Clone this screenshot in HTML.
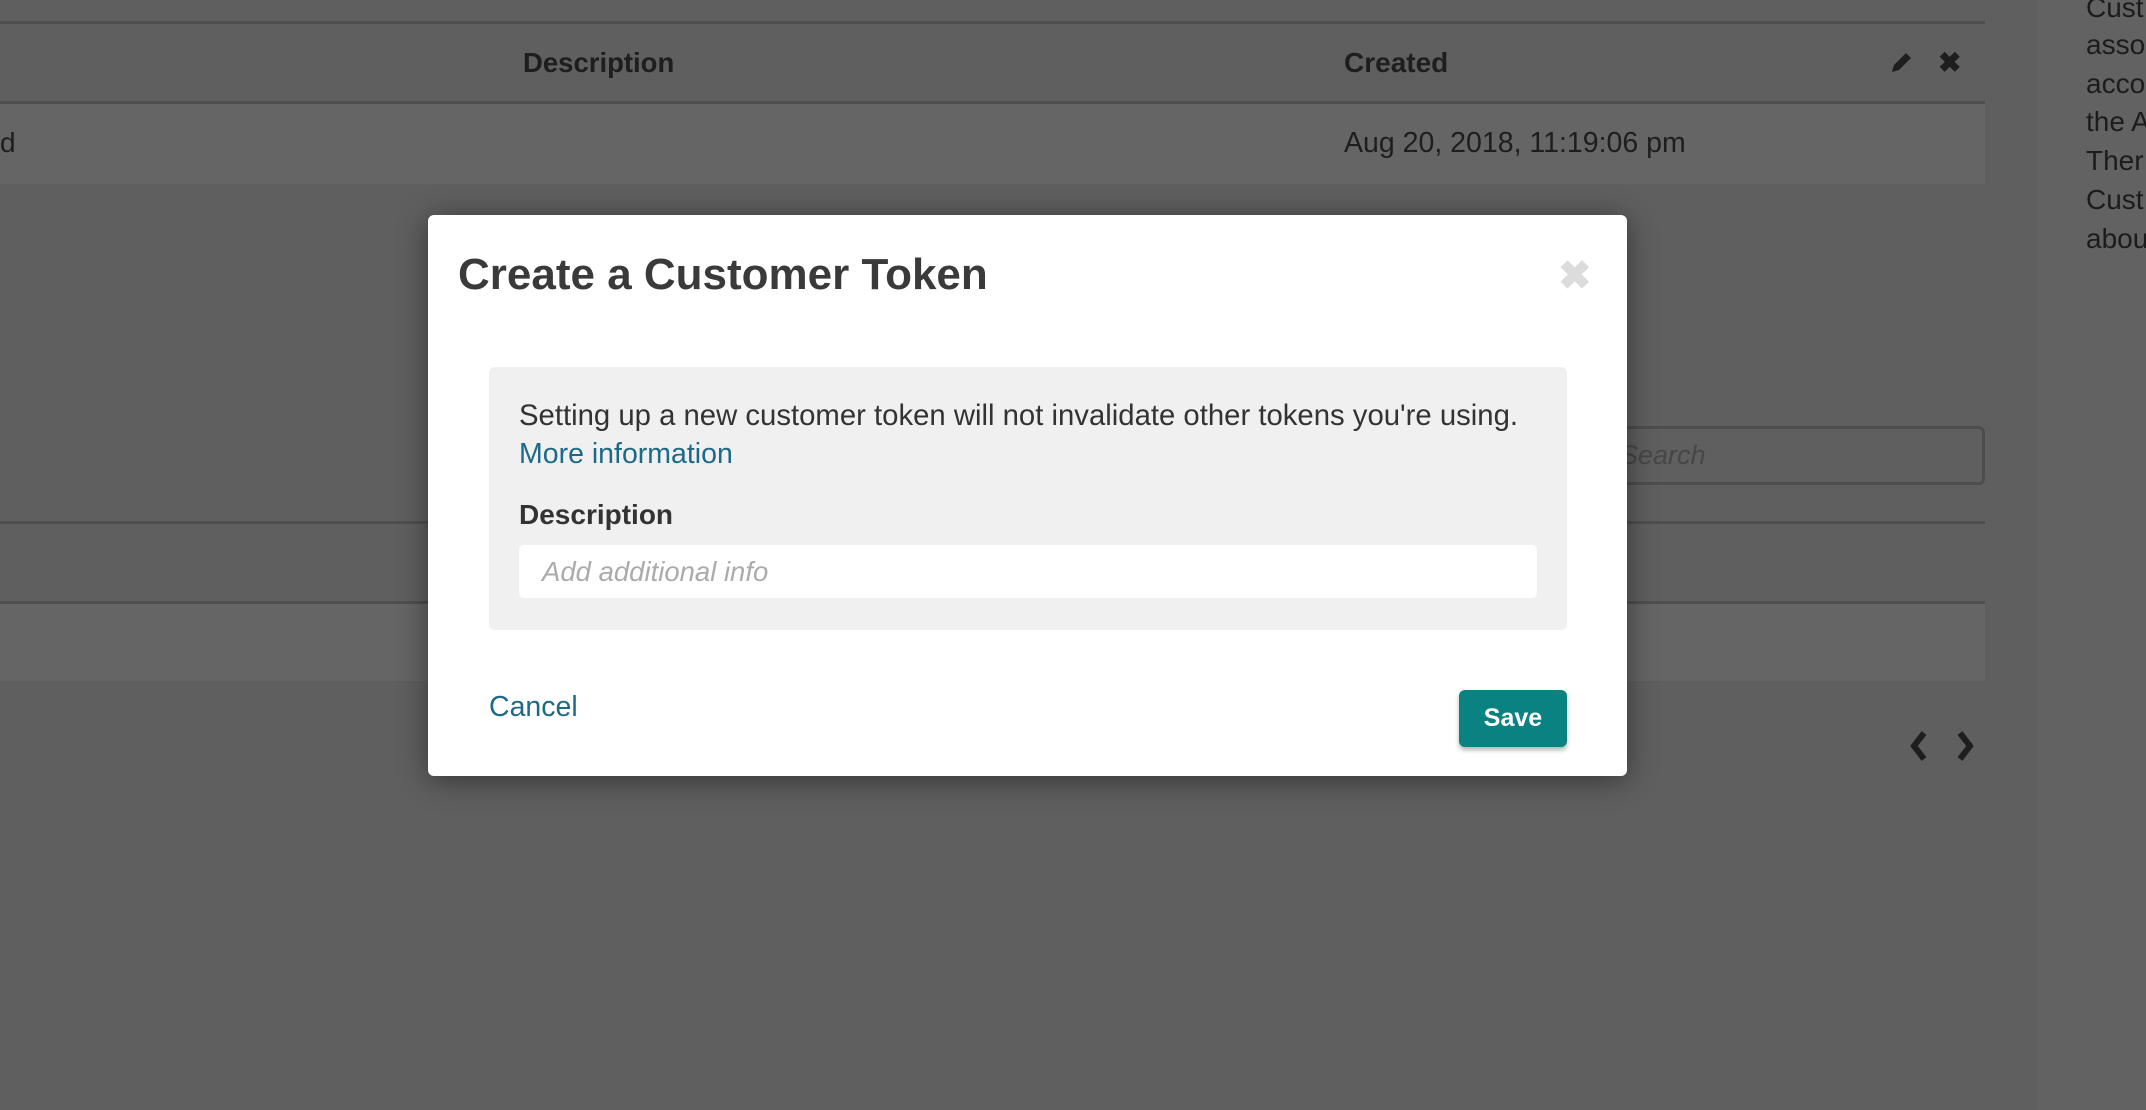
<!DOCTYPE html>
<html><head><meta charset="utf-8"><style>
*{margin:0;padding:0;box-sizing:border-box}
body{width:2146px;height:1110px;overflow:hidden;background:#5f5f5f;font-family:"Liberation Sans",sans-serif;position:relative;color:#262626}
.a{position:absolute;white-space:nowrap}
.line{position:absolute;left:0;width:1985px;height:3px;background:#4f4f4f}
.side{position:absolute;left:2037px;top:0;width:109px;height:1110px;background:#626262;overflow:hidden}
.side div{position:absolute;left:49px;font-size:28px;color:#1c1c1c;white-space:nowrap}
.modal{position:absolute;left:428px;top:215px;width:1199px;height:561px;background:#fff;border-radius:6px;box-shadow:0 4px 30px rgba(0,0,0,.45)}
</style></head><body>
<div class="line" style="top:21px"></div>
<div class="a" style="left:523px;top:47px;font-size:27.5px;font-weight:bold;color:#1e1e1e">Description</div>
<div class="a" style="left:1344px;top:47px;font-size:28px;font-weight:bold;color:#1e1e1e">Created</div>
<svg class="a" style="left:1888px;top:50px" width="26" height="26" viewBox="0 0 26 26"><path d="M4 22 L6 15 L18 3 L23 8 L11 20 Z" fill="#1e1e1e"/></svg>
<div class="a" style="left:1938px;top:46px;font-size:28px;font-weight:bold;color:#1e1e1e">✖</div>
<div class="line" style="top:101px"></div>
<div class="a" style="left:0;top:104px;width:1985px;height:80px;background:#656565"></div>
<div class="a" style="left:0;top:127px;font-size:28px;color:#1e1e1e">d</div>
<div class="a" style="left:1344px;top:127px;font-size:28.5px;color:#1e1e1e">Aug 20, 2018, 11:19:06 pm</div>
<div class="a" style="left:1560px;top:426px;width:425px;height:59px;border:3px solid #4d4d4d;border-radius:6px"></div>
<div class="a" style="left:1620px;top:440px;font-size:27px;font-style:italic;color:#474747">Search</div>
<div class="line" style="top:521px"></div>
<div class="line" style="top:601px"></div>
<div class="a" style="left:0;top:604px;width:1985px;height:77px;background:#656565"></div>
<svg class="a" style="left:1908px;top:730px" width="66" height="32" viewBox="0 0 66 32"><path d="M16 3 L6 16 L16 29" stroke="#1e1e1e" stroke-width="6" fill="none"/><path d="M52 3 L62 16 L52 29" stroke="#1e1e1e" stroke-width="6" fill="none"/></svg>
<div class="side">
<div style="top:-8px">Cust</div><div style="top:29px">asso</div><div style="top:68px">acco</div><div style="top:106px">the A</div><div style="top:145px">Ther</div><div style="top:184px">Cust</div><div style="top:223px">abou</div>
</div>
<div class="modal">
<div class="a" style="left:30px;top:35px;font-size:44px;font-weight:bold;color:#3a3a3a">Create a Customer Token</div>
<div class="a" style="left:1130px;top:38px;font-size:40px;font-weight:bold;color:#dcdcdc">✖</div>
<div class="a" style="left:61px;top:152px;width:1078px;height:263px;background:#f0f0f0;border-radius:6px">
<div class="a" style="left:30px;top:32px;font-size:29.3px;color:#333">Setting up a new customer token will not invalidate other tokens you're using.</div>
<div class="a" style="left:30px;top:71px;font-size:28.5px;color:#1d6a88">More information</div>
<div class="a" style="left:30px;top:132px;font-size:28px;font-weight:bold;color:#333">Description</div>
<div class="a" style="left:30px;top:178px;width:1018px;height:53px;background:#fff;border-radius:5px"></div>
<div class="a" style="left:53px;top:189px;font-size:27.5px;font-style:italic;color:#ababab">Add additional info</div>
</div>
<div class="a" style="left:61px;top:476px;font-size:28.5px;color:#1d6a88">Cancel</div>
<div class="a" style="left:1031px;top:475px;width:108px;height:57px;background:#0a8282;border-radius:6px;box-shadow:0 3px 5px rgba(0,0,0,.3);color:#fff;font-size:25px;font-weight:bold;text-align:center;line-height:57px">Save</div>
</div>
</body></html>
